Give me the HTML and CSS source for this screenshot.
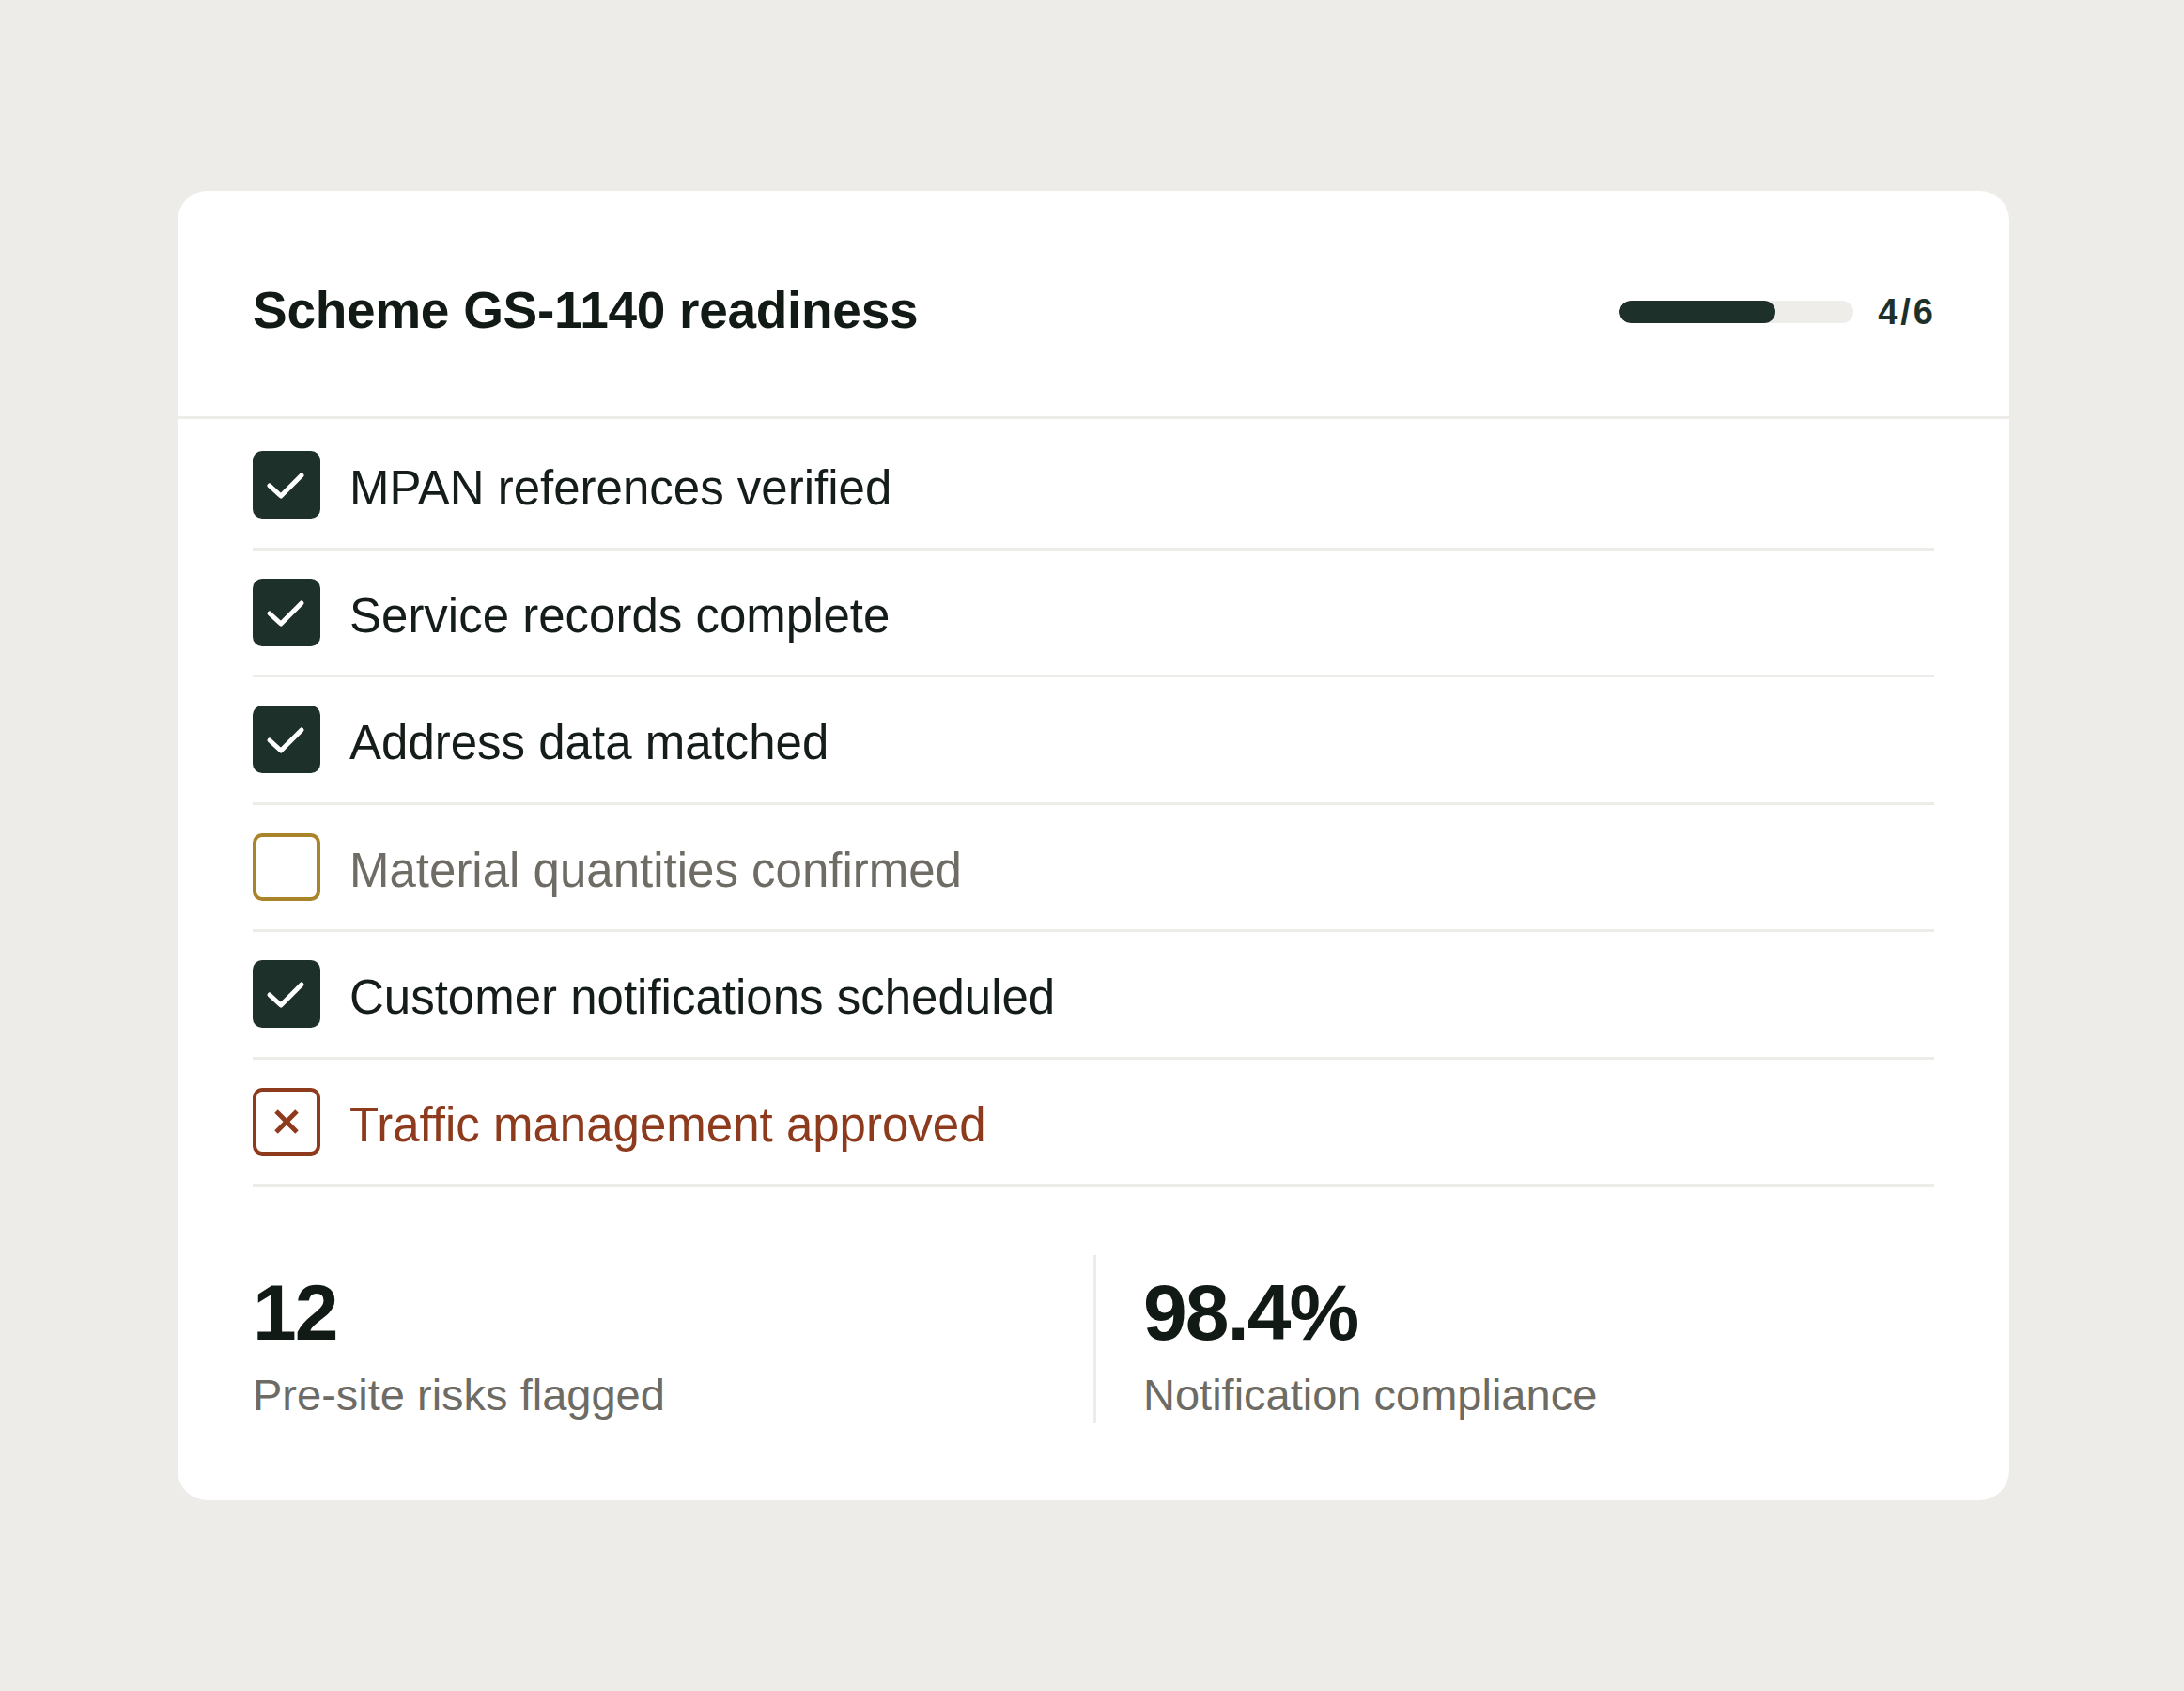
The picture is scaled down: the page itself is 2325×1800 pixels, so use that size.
FILE: index.html
```html
<!DOCTYPE html>
<html lang="en">
<head>
<meta charset="utf-8">
<title>Scheme GS-1140 readiness</title>
<link rel="stylesheet" href="styles.css">
</head>
<body>
<main class="card">
  <header class="card-head">
    <h1 class="title">Scheme GS-1140 readiness</h1>
    <div class="progress">
      <div class="track"><div class="fill" style="width:66.67%"></div></div>
      <span class="count">4/6</span>
    </div>
  </header>
  <ul class="checklist">
    <li class="item done">
      <span class="box"><svg viewBox="0 0 72 72" width="72" height="72"><polyline points="18,37 30,48 52,26" /></svg></span>
      <span class="label">MPAN references verified</span>
    </li>
    <li class="item done">
      <span class="box"><svg viewBox="0 0 72 72" width="72" height="72"><polyline points="18,37 30,48 52,26" /></svg></span>
      <span class="label">Service records complete</span>
    </li>
    <li class="item done">
      <span class="box"><svg viewBox="0 0 72 72" width="72" height="72"><polyline points="18,37 30,48 52,26" /></svg></span>
      <span class="label">Address data matched</span>
    </li>
    <li class="item pending">
      <span class="box"></span>
      <span class="label">Material quantities confirmed</span>
    </li>
    <li class="item done">
      <span class="box"><svg viewBox="0 0 72 72" width="72" height="72"><polyline points="18,37 30,48 52,26" /></svg></span>
      <span class="label">Customer notifications scheduled</span>
    </li>
    <li class="item failed">
      <span class="box"><svg viewBox="0 0 64 64" width="64" height="64"><line x1="21" y1="21" x2="43" y2="43" /><line x1="43" y1="21" x2="21" y2="43" /></svg></span>
      <span class="label">Traffic management approved</span>
    </li>
  </ul>
  <section class="stats">
    <div class="stat">
      <div class="value">12</div>
      <div class="caption">Pre-site risks flagged</div>
    </div>
    <div class="stat stat-right">
      <div class="value">98.4%</div>
      <div class="caption">Notification compliance</div>
    </div>
  </section>
</main>
</body>
</html>
```

FILE: styles.css
```css
html, body {
  margin: 0;
  padding: 0;
  background: #eeece8;
}

body {
  min-height: 100vh;
  display: flex;
  align-items: center;
  justify-content: center;
  padding-left: 3px;
  box-sizing: border-box;
  font-family: "Liberation Sans", Arial, sans-serif;
  color: #131b17;
}

.card {
  width: 1950px;
  background: #ffffff;
  border-radius: 32px;
  box-sizing: border-box;
}

.card-head {
  display: flex;
  align-items: center;
  justify-content: space-between;
  padding: 87px 81px 73px 80px;
  border-bottom: 3px solid #eeece8;
}

.title {
  margin: 0;
  font-size: 55px;
  line-height: 80px;
  font-weight: 700;
  letter-spacing: -0.3px;
  color: #121a16;
}

.progress {
  display: flex;
  align-items: center;
  gap: 26px;
  padding-top: 3px;
}

.track {
  width: 249px;
  height: 24px;
  border-radius: 12px;
  background: #efede9;
  overflow: hidden;
}

.fill {
  height: 100%;
  background: #1d302a;
  border-radius: 12px;
}

.count {
  font-size: 38px;
  line-height: 44px;
  font-weight: 700;
  letter-spacing: 3px;
  margin-right: -3px;
  color: #1d302a;
}

.checklist {
  list-style: none;
  margin: 0;
  padding: 4px 80px 0;
}

.item {
  display: flex;
  align-items: center;
  gap: 31px;
  padding: 30px 0 30.5px;
  border-bottom: 3px solid #eeece8;
}

.box {
  flex: none;
  width: 72px;
  height: 72px;
  box-sizing: border-box;
  border-radius: 10px;
  display: flex;
  align-items: center;
  justify-content: center;
}

.box svg {
  display: block;
  fill: none;
}

.label {
  font-size: 51px;
  line-height: 60px;
  padding-top: 8px;
  color: #151d19;
}

.done .box {
  background: #1d302a;
}

.done .box polyline {
  stroke: #ffffff;
  stroke-width: 5;
  stroke-linecap: round;
  stroke-linejoin: round;
}

.pending .box {
  border: 4px solid #a9842b;
}

.pending .label {
  color: #6e6c65;
}

.failed .box {
  border: 4px solid #8d3a1d;
}

.failed .box line {
  stroke: #8d3a1d;
  stroke-width: 5;
}

.failed .label {
  color: #8d3a1d;
}

.stats {
  display: grid;
  grid-template-columns: 1fr 1fr;
  padding: 73px 80px 82px;
}

.stat {
  padding: 19px 0 3px;
}

.stat-right {
  border-left: 3px solid #eeece8;
  padding-left: 50px;
}

.value {
  font-size: 84px;
  line-height: 84px;
  font-weight: 700;
  letter-spacing: -2px;
  color: #121a16;
  margin-bottom: 19px;
}

.caption {
  font-size: 47px;
  line-height: 54px;
  color: #6d6b63;
}
```
